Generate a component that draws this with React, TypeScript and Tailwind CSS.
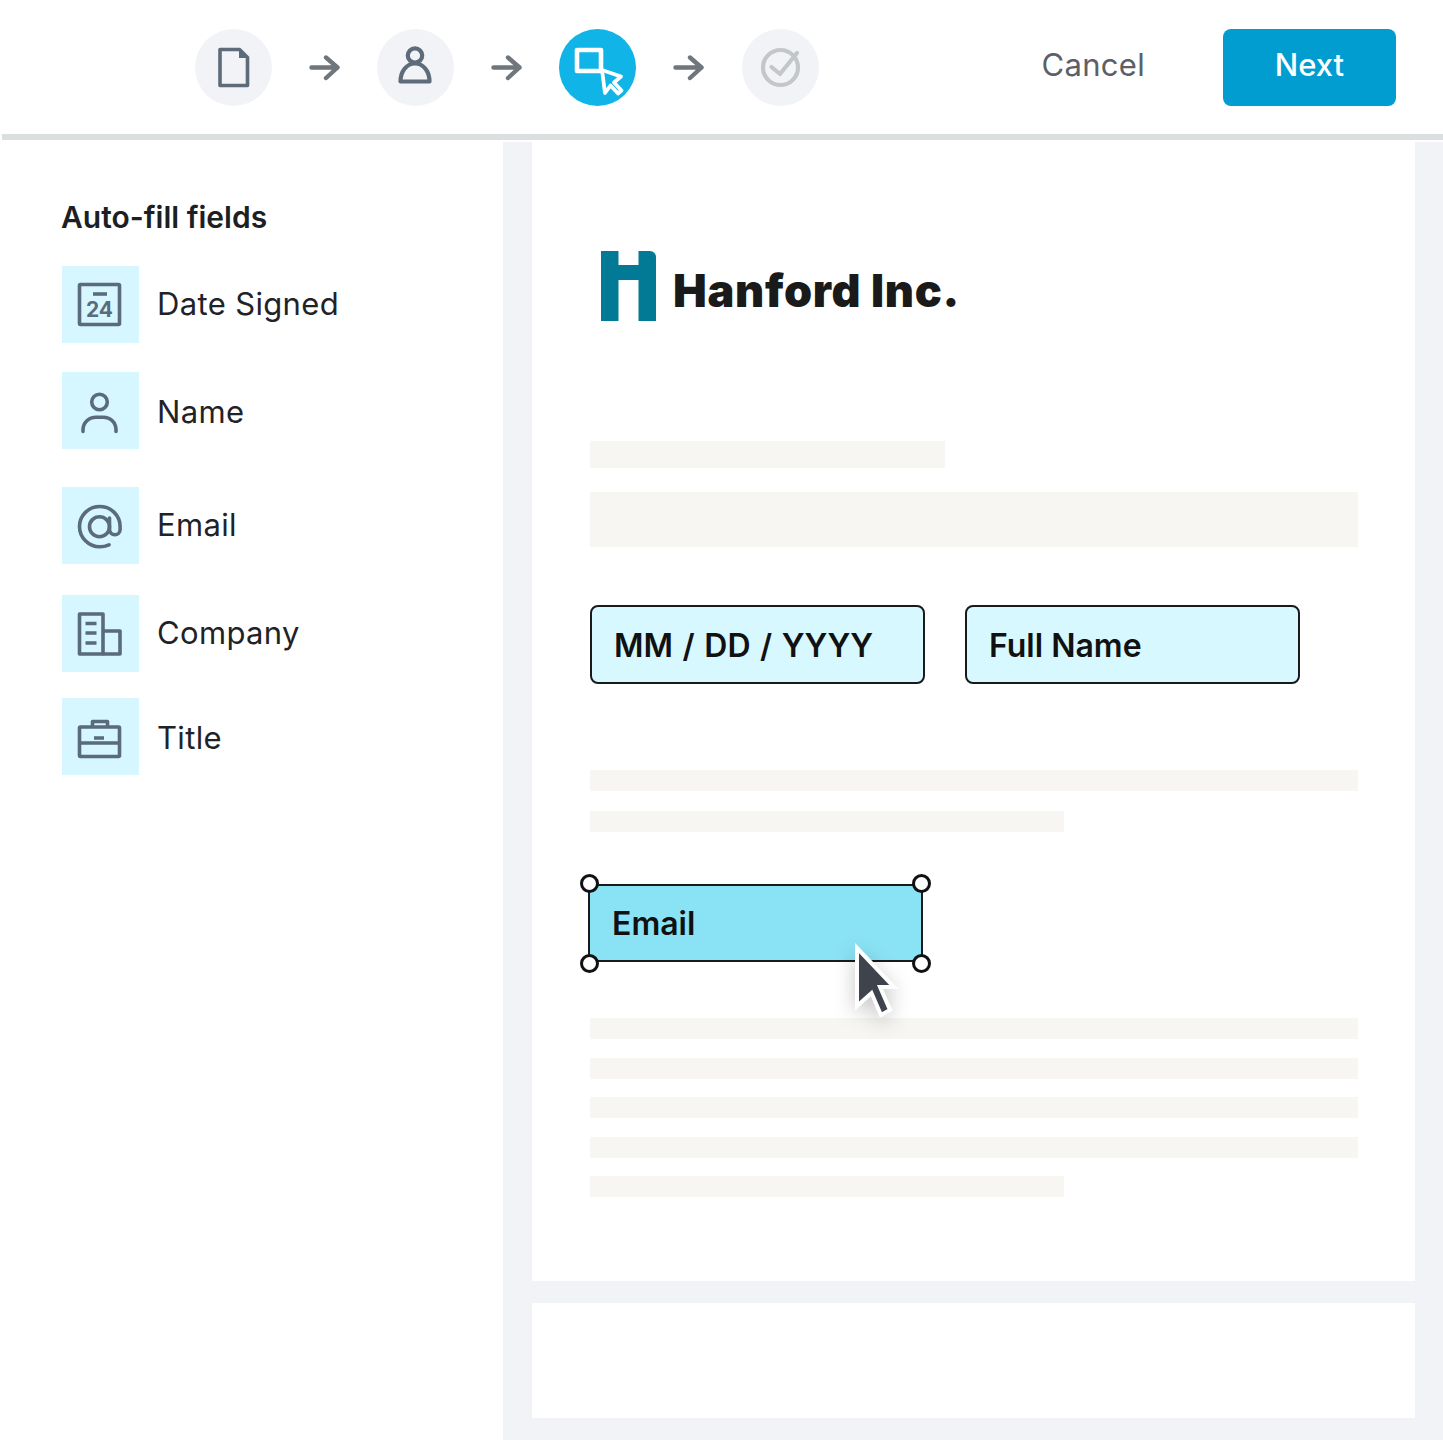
import React from 'react'

const fields = [
  { label: 'Date Signed', icon: <CalendarIcon />, gap: 'mt-[29px]', nudge: '' },
  { label: 'Name', icon: <PersonIcon />, gap: 'mt-[29px]', nudge: 'pt-[4px]' },
  { label: 'Email', icon: <AtIcon />, gap: 'mt-[38px]', nudge: '' },
  { label: 'Company', icon: <CompanyIcon />, gap: 'mt-[31px]', nudge: '' },
  { label: 'Title', icon: <CaseIcon />, gap: 'mt-[26px]', nudge: 'pt-[4px]' },
]

function CalendarIcon() {
  return (
    <svg viewBox="0 0 77 77" className="w-full h-full" fill="none" stroke="#5a6b7b" strokeWidth="3.6" strokeLinejoin="round">
      <rect x="17.5" y="18.5" width="40" height="40" rx="1" />
      <path d="M31 28h14" />
      <text x="37.5" y="51" textAnchor="middle" fill="#5a6b7b" stroke="none" fontSize="21" fontWeight="700" fontFamily="Inter, sans-serif">24</text>
    </svg>
  )
}

function PersonIcon() {
  return (
    <svg viewBox="0 0 77 77" className="w-full h-full" fill="none" stroke="#5a6b7b" strokeWidth="3.6" strokeLinecap="round">
      <circle cx="37.5" cy="30" r="7.8" />
      <path d="M21 59.5v-1.5c0-7.5 6-12.8 13-12.8h7c7.5 0 13 5.3 13 12.8v1.5" />
    </svg>
  )
}

function AtIcon() {
  return (
    <svg viewBox="0 0 77 77" className="w-full h-full" fill="none" stroke="#5a6b7b" strokeWidth="3.6" strokeLinecap="round">
      <circle cx="37.5" cy="39.7" r="10" />
      <path d="M47.5 31v11.5a5.3 5.3 0 0 0 10.6 0v-3c0-11-9-20-20.300-20s-20.300 9-20.300 20 9 20.300 20.300 20.300c3.500 0 6.500-.8 9.200-2" />
    </svg>
  )
}

function CompanyIcon() {
  return (
    <svg viewBox="0 0 77 77" className="w-full h-full" fill="none" stroke="#5a6b7b" strokeWidth="3.6" strokeLinejoin="round">
      <path d="M17.500 19h23.500v40h-23.500z" />
      <path d="M41 36h17v23h-17" />
      <path d="M23.500 28.500h11M23.500 38h11M23.500 48h11" />
    </svg>
  )
}

function CaseIcon() {
  return (
    <svg viewBox="0 0 77 77" className="w-full h-full" fill="none" stroke="#5a6b7b" strokeWidth="3.6" strokeLinejoin="round">
      <rect x="17.500" y="29" width="40" height="29.500" rx="1" />
      <path d="M30.500 29v-5.500h15v5.500M17.500 45h40M32 40h10" />
    </svg>
  )
}

function Arrow() {
  return (
    <div className="w-[105.2px] flex justify-center">
      <svg width="32" height="26" viewBox="0 0 32 26" fill="none" stroke="#6f767c" strokeWidth="4.400" strokeLinecap="round" strokeLinejoin="round">
        <path d="M2.500 12.500h26M17 2.500l11.500 10L17 23" />
      </svg>
    </div>
  )
}

function Bar({ w, h = 'h-[21px]', mt }: { w: string; h?: string; mt: string }) {
  return <div className={`${w} ${h} ${mt} bg-[#f7f6f3]`} />
}

function Handle({ pos }: { pos: string }) {
  return <span className={`absolute ${pos} w-[19px] h-[19px] rounded-full bg-white border-[3px] border-[#111]`} />
}

export default function App() {
  return (
    <div className="w-[1443px] h-[1440px] overflow-hidden bg-white flex flex-col font-['Inter',sans-serif] text-[#1f2328]">
      {/* top bar */}
      <header className="h-[134px] flex items-start pt-[29px] pl-[195px] pr-[47px] shrink-0">
        <div className="flex items-center h-[77px]">
          <div className="w-[77px] h-[77px] rounded-full bg-[#f1f3f6]">
            <svg viewBox="0 0 77 77" fill="none" stroke="#5d6b7a" strokeWidth="3.600" strokeLinejoin="round">
              <path d="M25 20.500h19.500l8 8v28h-27.500z" />
              <path d="M44 20.500l8.500 8.500h-8.500z" fill="#5d6b7a" stroke="none" />
            </svg>
          </div>
          <Arrow />
          <div className="w-[77px] h-[77px] rounded-full bg-[#f1f3f6]">
            <svg viewBox="0 0 77 77" fill="none" stroke="#5d6b7a" strokeWidth="4.200" strokeLinejoin="round">
              <circle cx="38" cy="26.500" r="7.200" />
              <path d="M23.500 52.500c0-10 6-18 14.500-18s14.500 8 14.500 18z" />
            </svg>
          </div>
          <Arrow />
          <div className="w-[77px] h-[77px] rounded-full bg-[#10b4e6]">
            <svg viewBox="0 0 77 77" fill="none" stroke="#fff" strokeWidth="4.600" strokeLinejoin="round">
              <path d="M18 21h24v21h-24z" />
              <path d="M43 41l19 6.500-7 6 7.500 8-3.500 3-7.500-8-5.500 7.500z" strokeWidth="3.800" />
            </svg>
          </div>
          <Arrow />
          <div className="w-[77px] h-[77px] rounded-full bg-[#f1f3f6]">
            <svg viewBox="0 0 77 77" fill="none" stroke="#c4c7c9" strokeWidth="4.200" strokeLinecap="round" strokeLinejoin="round">
              <circle cx="38.500" cy="38.500" r="17.500" />
              <path d="M29.500 38l8.500 7 17-21" />
            </svg>
          </div>
        </div>
        <button className="ml-auto mr-[78px] h-[77px] pb-[4px] text-[31px] tracking-[0.3px] text-[#5c6066]">Cancel</button>
        <button className="w-[173px] h-[77px] pb-[5px] rounded-lg bg-[#019dd1] text-white text-[31px] font-medium">Next</button>
      </header>
      <div className="h-[6px] ml-[2px] bg-[#dcdfdf] shrink-0" />

      <div className="flex flex-1 min-h-0">
        {/* left panel */}
        <aside className="w-[503px] shrink-0 pl-[62px]">
          <h2 className="mt-[57px] -ml-[1px] h-[40px] text-[30px] leading-[40px] font-semibold text-[#1c1f23]">Auto-fill fields</h2>
          <ul>
            {fields.map((f) => (
              <li key={f.label} className={`flex items-center ${f.gap}`}>
                <div className="w-[77px] h-[77px] bg-[#d6f7ff]">{f.icon}</div>
                <span className={`ml-[18px] text-[31px] tracking-[0.35px] ${f.nudge}`}>{f.label}</span>
              </li>
            ))}
          </ul>
        </aside>

        {/* document */}
        <main className="flex-1 mt-[2px] bg-[#f1f3f6] pl-[29px] pr-[28px] flex flex-col min-w-0">
          <section className="h-[1139px] bg-white pl-[58px] pr-[57px] pt-[109px] shrink-0">
            <div className="flex items-center h-[70px] pl-[11px]">
              <svg width="55" height="70" viewBox="0 0 55 70" fill="#027a96">
                <path d="M0 0h17.500v14h20V0H49a6 6 0 0 1 6 6v64H37.500V29h-20v41H0z" />
              </svg>
              <span className="ml-[17px] pt-[8px] text-[45px] font-black tracking-[0.7px] text-[#1a1a1a] leading-none">Hanford Inc.</span>
            </div>
            <Bar w="w-[355px]" h="h-[27px]" mt="mt-[120px]" />
            <Bar w="w-full" h="h-[55px]" mt="mt-[24px]" />
            <div className="flex gap-[40px] mt-[58px]">
              <div className="w-[335px] h-[79px] rounded-lg border-2 border-[#1a1a1a] bg-[#d8f8ff] flex items-center pl-[22px] pt-[2px] font-semibold text-[32px] text-[#111] [word-spacing:1.5px]">MM / DD / YYYY</div>
              <div className="w-[335px] h-[79px] rounded-lg border-2 border-[#1a1a1a] bg-[#d8f8ff] flex items-center pl-[22px] pt-[2px] font-semibold text-[32px] text-[#111]">Full Name</div>
            </div>
            <Bar w="w-full" mt="mt-[86px]" />
            <Bar w="w-[474px]" mt="mt-[20px]" />
            <div className="relative w-[335px] h-[78px] -ml-[2px] mt-[52px] border-2 border-[#1a1a1a] bg-[#8ae3f5] flex items-center pl-[22px] pt-[2px] font-semibold text-[32px] text-[#111]">
              Email
              <Handle pos="-left-[10px] -top-[12px]" />
              <Handle pos="-right-[10px] -top-[12px]" />
              <Handle pos="-left-[10px] -bottom-[13px]" />
              <Handle pos="-right-[10px] -bottom-[13px]" />
              <svg className="absolute left-[262px] top-[56px] drop-shadow-[0_6px_10px_rgba(0,0,0,0.22)]" width="48" height="80" viewBox="0 0 48 80" fill="#3f444c" stroke="#fff" strokeWidth="4">
                <path d="M5 6l37 39H28l10 23-9 5-9.500-22L5 64z" />
              </svg>
            </div>
            <Bar w="w-full" mt="mt-[56px]" />
            <Bar w="w-full" mt="mt-[19px]" />
            <Bar w="w-full" mt="mt-[18px]" />
            <Bar w="w-full" mt="mt-[19px]" />
            <Bar w="w-[474px]" mt="mt-[18px]" />
          </section>
          <section className="h-[115px] bg-white mt-[22px] shrink-0" />
        </main>
      </div>
    </div>
  )
}
